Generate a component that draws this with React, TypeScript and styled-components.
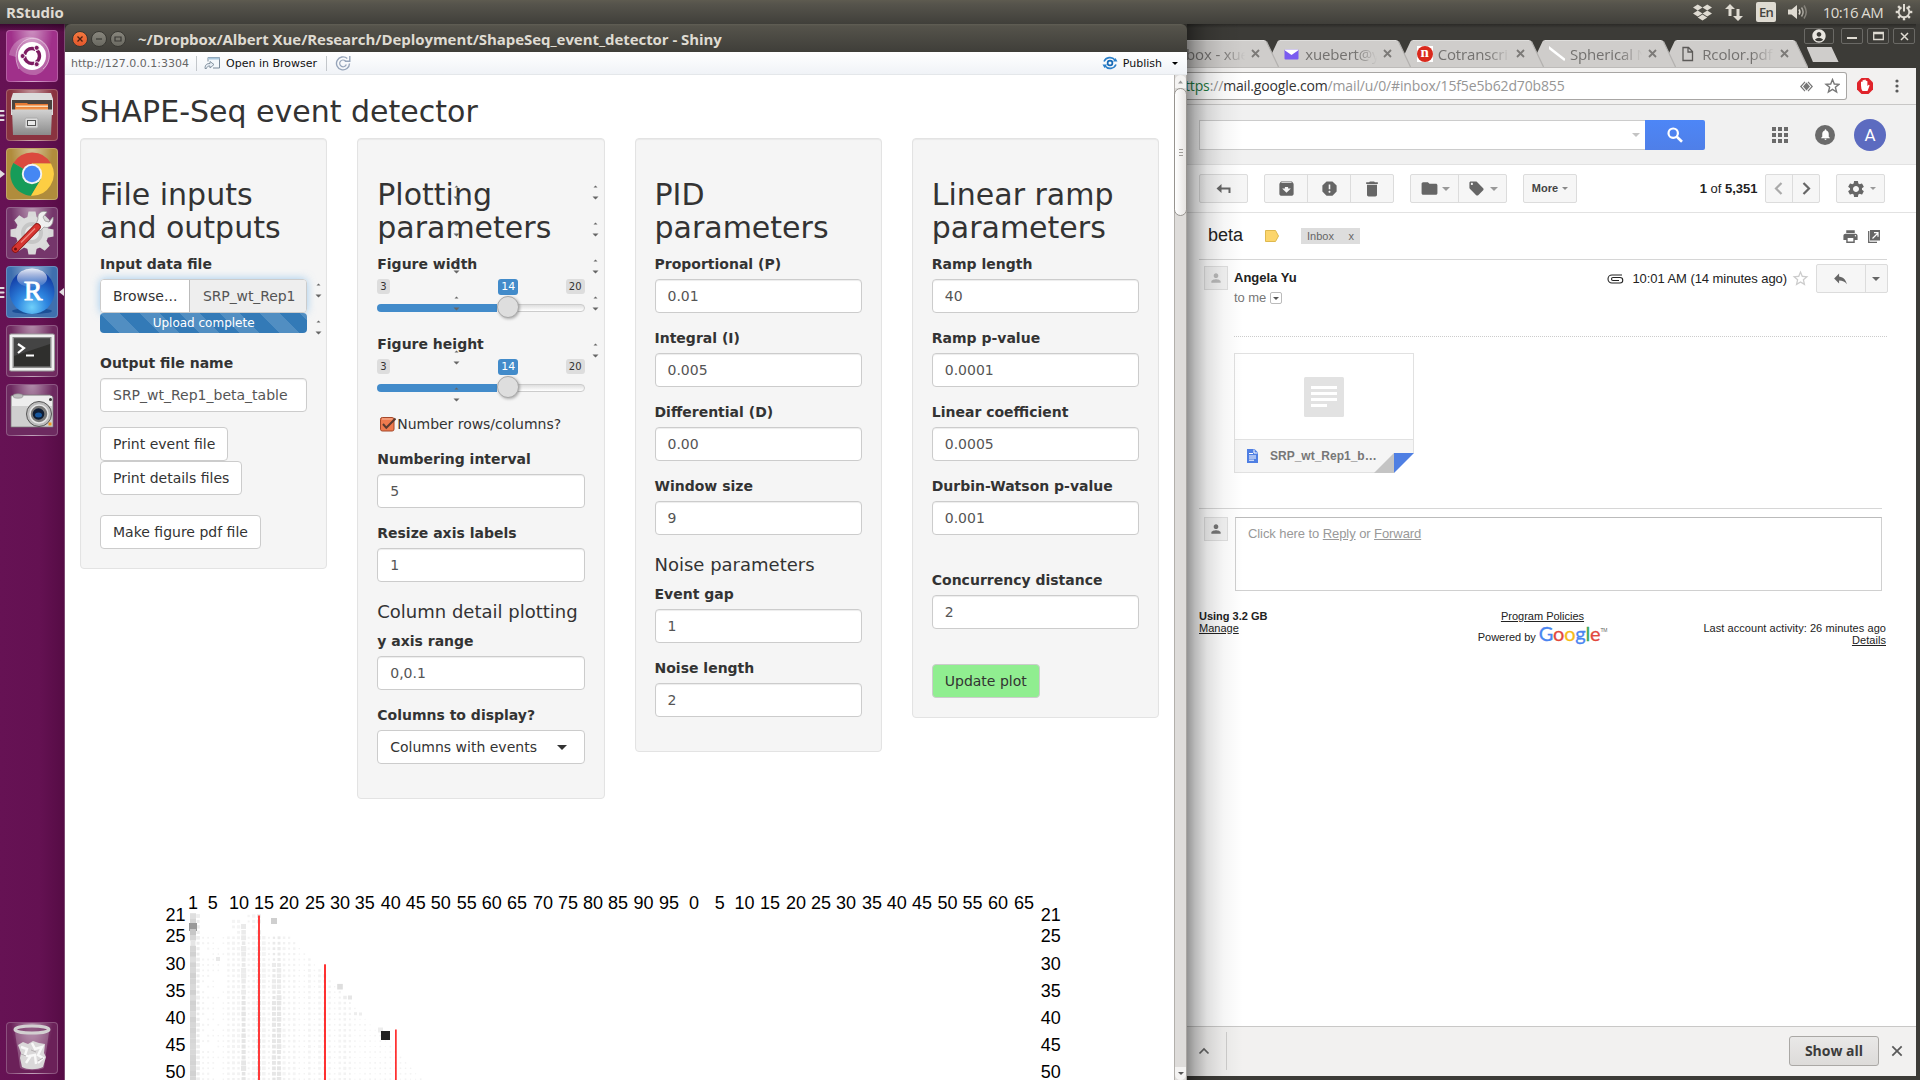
import React from "react";
import styled, { createGlobalStyle, css } from "styled-components";
import {
  MdArchive, MdReport, MdDelete, MdFolder, MdLocalOffer, MdSettings, MdPrint,
  MdNotifications, MdReply, MdPerson, MdStarBorder, MdAccountCircle,
} from "react-icons/md";
import { FaDropbox } from "react-icons/fa";

const dejavu = `"DejaVu Sans", sans-serif`;
const arial = `"Liberation Sans", Arial, sans-serif`;
const ubuntu = `"Open Sans", "Noto Sans", sans-serif`;

const GlobalStyle = createGlobalStyle`
  *, *::before, *::after { box-sizing: border-box; }
  html, body { margin: 0; padding: 0; background: #3c3b37; overflow: hidden; }
  svg { display: block; flex: none; }
`;

/* ---------- desktop ---------- */

const Desktop = styled.div`
  width: 1920px;
  height: 1080px;
  display: flex;
  flex-direction: column;
  overflow: hidden;
  font-family: ${dejavu};
`;

const MenuBar = styled.header`
  height: 24px;
  flex: none;
  display: flex;
  align-items: center;
  justify-content: space-between;
  padding: 0 7px 0 6px;
  background: linear-gradient(#5e5b50 0, #56544c 4px, #403f3a 24px);
  color: #dfdbd2;
  font-family: ${ubuntu};
`;

const AppName = styled.span`
  font-size: 15px;
  font-weight: 700;
  line-height: 22px;
`;

const Tray = styled.div`
  display: flex;
  align-items: center;
`;

const TraySlot = styled.div<{ $w: number }>`
  width: ${(p) => p.$w}px;
  height: 24px;
  display: flex;
  align-items: center;
  justify-content: center;
`;

const Lang = styled.div`
  width: 20px;
  height: 20px;
  border-radius: 2px;
  background: #dfdbd2;
  color: #45443f;
  font-size: 13px;
  line-height: 20px;
  text-align: center;
  font-weight: 600;
  letter-spacing: -0.8px;
`;

const Clock = styled.span`
  font-size: 15px;
  line-height: 22px;
  letter-spacing: -0.6px;
  white-space: nowrap;
`;

const Work = styled.div`
  flex: 1;
  display: flex;
  min-height: 0;
`;

/* ---------- launcher ---------- */

const Launcher = styled.nav`
  width: 65px;
  flex: none;
  display: flex;
  flex-direction: column;
  gap: 7px;
  padding: 6px 6px 6px;
  background: linear-gradient(rgba(30, 0, 25, 0.6), transparent 8px),
    linear-gradient(90deg, #661254 0, #641152 40px, #560c45 64px, #7d4a72 64px);
`;

const Tile = styled.div<{ $bg: string; $last?: boolean }>`
  position: relative;
  width: 52px;
  height: 52px;
  flex: none;
  border-radius: 4px;
  border: 1px solid rgba(255, 255, 255, 0.22);
  background: radial-gradient(ellipse at 50% -10%, rgba(255, 255, 255, 0.5), transparent 60%), ${(p) => p.$bg};
  display: flex;
  align-items: center;
  justify-content: center;
  ${(p) => p.$last && css`margin-top: auto;`}
`;

const RunningMark = styled.svg<{ $side: "left" | "right" }>`
  position: absolute;
  top: 19px;
  ${(p) => (p.$side === "left" ? "left: -7px;" : "right: -7px;")}
`;

const Pips = () => (
  <RunningMark $side="left" width="6" height="14" viewBox="0 0 6 14">
    <path d="M0 2h3.500M0 6.500h3.500M0 11h3.500" stroke="#e2dde0" strokeWidth="2.200" strokeLinecap="round" />
  </RunningMark>
);

const UbuntuIcon = () => (
  <svg width="50" height="50" viewBox="0 0 50 50">
    <path d="M2 24C5 6 26 0 38 12c9 10 4 28-9 32-12 1-20-6-20-18" fill="rgba(255,255,255,.25)" />
    <path d="M12 38C3 20 16 4 30 8c14 5 16 22 6 30" fill="none" stroke="rgba(255,255,255,.45)" strokeWidth="1" />
    <circle cx="25" cy="25" r="14" fill="#fff" />
    <circle cx="25" cy="25" r="7.500" fill="none" stroke="#7d1c62" strokeWidth="3.400" strokeDasharray="14.2 1.5" strokeDashoffset="-9" />
    <g fill="#7d1c62" stroke="#fff" strokeWidth=".9">
      <circle cx="15.600" cy="25" r="2.500" />
      <circle cx="29.700" cy="16.800" r="2.500" />
      <circle cx="29.700" cy="33.200" r="2.500" />
    </g>
  </svg>
);

const FilesIcon = () => (
  <svg width="50" height="50" viewBox="0 0 50 50">
    <defs>
      <linearGradient id="cab" x1="0" y1="0" x2="0" y2="1">
        <stop offset="0" stopColor="#d2d2d2" />
        <stop offset="1" stopColor="#8b8b8b" />
      </linearGradient>
    </defs>
    <path d="M6 3h38l2 6v16H4V9z" fill="#dcdcdc" />
    <path d="M5 10h40v12H5z" fill="#4a443f" />
    <path d="M8 13h12l1 1h20v8H8z" fill="#e77a33" />
    <path d="M9 15.500h32v1.500H9z" fill="#f7dcb8" />
    <path d="M9 17.500h32v4H9z" fill="#f09145" />
    <path d="M5 19.500h40L44 45H6z" fill="url(#cab)" />
    <rect x="18" y="28" width="13" height="10" rx="1.500" fill="#dcdcdc" stroke="#aaa" />
    <rect x="20.500" y="30.500" width="8" height="5" fill="#e9e9e9" stroke="#555" />
  </svg>
);

const ChromeIcon = () => (
  <svg width="46" height="46" viewBox="-23 -23 46 46">
    <path d="M0 0L-18.600-11A21.700 21.700 0 0 1 19-10.500L0-10.500z" fill="#db4a3e" />
    <path d="M0 0L-18.600-11A21.700 21.700 0 0 0-1 21.700L9 5z" fill="#169c59" />
    <path d="M0-10.500H19A21.700 21.700 0 0 1-1 21.700L9 5z" fill="#fdce43" />
    <circle r="10.200" fill="#f3f3f3" />
    <circle r="8.300" fill="#4587f3" />
  </svg>
);

const ToolsIcon = () => (
  <svg width="50" height="50" viewBox="0 0 50 50">
    <g transform="translate(25 25)">
      {Array.from({ length: 8 }, (_, i) => (
        <path key={i} d="M-5-14l1.500-7.500h7L5-14z" fill="#d9d9d9" transform={`rotate(${i * 45})`} />
      ))}
      <circle r="16.500" fill="#dcdcdc" />
      <circle r="11" fill="#c6c6c6" />
      <circle r="7" fill="#e6e6e6" />
    </g>
    <path d="M31 11c-1-6 4-9 9-7l-4 5 2 4 4 1 4-5c1 8-4 12-9 10l-4 4-5-4z" fill="#efefef" stroke="#9a9a9a" strokeWidth=".8" />
    <path d="M8.500 41L30 19" stroke="#8e1512" strokeWidth="7.500" strokeLinecap="round" />
    <path d="M8.500 41L30 19" stroke="#d63530" strokeWidth="5.800" strokeLinecap="round" />
    <path d="M14 34.500L28 20.500" stroke="#ef8a80" strokeWidth="1.400" />
    <circle cx="8.500" cy="41" r="1.500" fill="#6b0f0c" />
  </svg>
);

const RText = styled.span`
  position: absolute;
  left: 0;
  right: 0;
  top: 9px;
  text-align: center;
  font-family: "Liberation Serif", serif;
  font-size: 28px;
  line-height: 30px;
  color: #fff;
  -webkit-text-stroke: 0.8px #fff;
  padding-left: 2px;
`;

const RBallIcon = () => (
  <>
    <svg width="50" height="50" viewBox="0 0 50 50">
      <defs>
        <radialGradient id="ball" cx=".5" cy=".85" r=".75">
          <stop offset="0" stopColor="#6fd0fa" />
          <stop offset=".45" stopColor="#2e86e0" />
          <stop offset="1" stopColor="#1440a8" />
        </radialGradient>
        <linearGradient id="gloss" x1="0" y1="0" x2="0" y2="1">
          <stop offset="0" stopColor="#fff" stopOpacity=".9" />
          <stop offset="1" stopColor="#fff" stopOpacity=".05" />
        </linearGradient>
      </defs>
      <ellipse cx="25" cy="44" rx="20" ry="3" fill="#1b4f96" />
      <circle cx="25" cy="24.500" r="22.500" fill="url(#ball)" />
      <ellipse cx="25" cy="11" rx="15" ry="9.500" fill="url(#gloss)" />
    </svg>
    <RText>R</RText>
  </>
);

const TerminalIcon = () => (
  <svg width="50" height="50" viewBox="0 0 50 50">
    <rect x="2.500" y="8" width="45" height="37" rx="1.500" fill="#f0f0f0" stroke="#999" />
    <rect x="5.500" y="11" width="39" height="31" fill="#8c8c8c" />
    <rect x="7" y="12.500" width="36" height="28" fill="#2f2f2d" />
    <path d="M7 30l36-12V12.500H7z" fill="#444" />
    <path d="M11 18l6 4-6 5M19 29.500h8" fill="none" stroke="#fff" strokeWidth="2.200" />
  </svg>
);

const CameraIcon = () => (
  <svg width="50" height="50" viewBox="0 0 50 50">
    <path d="M4 11l3-1h36l3 2v30H4z" fill="#cfcfcf" stroke="#777" strokeWidth=".7" />
    <path d="M5 11h40v10H5z" fill="#ededed" />
    <ellipse cx="11" cy="11" rx="5" ry="2.200" fill="#bdbdbd" stroke="#8a8a8a" strokeWidth=".6" />
    <circle cx="43.500" cy="14.500" r="1.500" fill="#333" />
    <circle cx="32" cy="29" r="12.500" fill="#bbb" stroke="#555" />
    <circle cx="32" cy="29" r="9" fill="#777" stroke="#e6e6e6" strokeWidth="1.500" />
    <circle cx="31.500" cy="29" r="5.800" fill="#101d33" />
    <ellipse cx="31.500" cy="30" rx="3.500" ry="2.500" fill="#17579e" />
    <rect x="41.500" y="37.500" width="3" height="3" fill="#f0991f" />
  </svg>
);

const TrashIcon = () => (
  <svg width="50" height="50" viewBox="0 0 50 50">
    <path d="M8 9h34l-5 36c-5 3-19 3-24 0z" fill="rgba(255,255,255,.22)" />
    <path d="M11 22l5-3 5 2 5-3 6 2 6 1-1 9 2 4-3 10c-6 3-16 3-21 0l-2-9 1-5z" fill="#dad8d9" />
    <path d="M14 24l6 2-2 6 5 2-4 6M25 20l3 6 7-2-4 8 5 3-5 5M22 33l6-1 1 9" stroke="#f8f8f8" strokeWidth="2.400" fill="none" />
    <path d="M14 31l5 2M24 27l5 2M31 38l5-3" stroke="#b5b1b3" strokeWidth="1" />
    <ellipse cx="25" cy="6.500" rx="17" ry="3.600" fill="rgba(130,70,115,.6)" stroke="#d3d0d1" strokeWidth="3" />
  </svg>
);

/* ---------- RStudio viewer window ---------- */

const Viewer = styled.section`
  width: 1122px;
  flex: none;
  display: flex;
  flex-direction: column;
  background: linear-gradient(#2f2e2a, #2f2e2a) top / 100% 12px no-repeat, #fff;
`;

const TitleBar = styled.div`
  height: 28px;
  flex: none;
  display: flex;
  align-items: center;
  padding: 1px 8px 0 7px;
  gap: 3px;
  border-radius: 6px 6px 0 0;
  background: linear-gradient(#605e55 0, #55534b 2px, #3f3e39 28px);
`;

const WinButton = styled.span<{ $close?: boolean }>`
  width: 16px;
  height: 16px;
  border-radius: 50%;
  border: 1px solid #393833;
  background: ${(p) => (p.$close ? "linear-gradient(#f4793f, #e4572c)" : "linear-gradient(#88867d, #6a6961)")};
  display: flex;
  align-items: center;
  justify-content: center;
`;

const WinTitle = styled.span`
  margin-left: 9px;
  font-family: ${ubuntu};
  font-weight: 700;
  font-size: 15px;
  line-height: 24px;
  letter-spacing: -0.06px;
  color: #dfdbd2;
  white-space: nowrap;
`;

const ViewerToolbar = styled.div`
  height: 23px;
  flex: none;
  display: flex;
  align-items: center;
  border-bottom: 1px solid #e4e7ea;
  background: linear-gradient(#fff, #f0f3f7);
  padding: 0 9px 0 6px;
  font-size: 11px;
  color: #111;
  white-space: nowrap;
`;

const Address = styled.span`
  width: 125px;
  color: #666;
`;

const Sep = styled.i`
  width: 1px;
  height: 15px;
  background: #c3c7cb;
`;

const OpenLink = styled.span`
  display: flex;
  align-items: center;
  gap: 4px;
  width: 129px;
  padding-left: 7px;
`;

const Refresh = styled.span`
  margin-left: 8px;
  margin-right: auto;
`;

const Publish = styled.span`
  display: flex;
  align-items: center;
  gap: 5px;
`;

const Caret = styled.i<{ $size?: number; $color?: string; $ml?: number }>`
  flex: none;
  width: 0;
  height: 0;
  margin-left: ${(p) => p.$ml ?? 0}px;
  border: ${(p) => p.$size ?? 4}px solid transparent;
  border-top-color: ${(p) => p.$color ?? "#777"};
  border-bottom: 0;
`;

const ViewerBody = styled.div`
  flex: 1;
  min-height: 0;
  display: flex;
`;

const Page = styled.main`
  flex: 1;
  min-width: 0;
  overflow: hidden;
  color: #333;
  font-size: 14px;
  line-height: 20px;
`;

const PageTitle = styled.h2`
  margin: 20px 15px 10px;
  font-size: 30px;
  line-height: 33px;
  font-weight: 400;
`;

const Columns = styled.div`
  display: grid;
  grid-template-columns: repeat(4, 1fr);
  align-items: start;
`;

const Well = styled.form`
  position: relative;
  margin: 0 15px;
  padding: 19px;
  border: 1px solid #e3e3e3;
  border-radius: 4px;
  background: #f5f5f5;
  box-shadow: inset 0 1px 1px rgba(0, 0, 0, 0.05);
`;

const WellTitle = styled.h2`
  margin: 20px 0 10px;
  font-size: 30px;
  line-height: 33px;
  font-weight: 400;
`;

const SubTitle = styled.h4`
  margin: 20px 0 9px;
  font-size: 18px;
  line-height: 20px;
  font-weight: 400;
  white-space: nowrap;
`;

const Group = styled.div<{ $mb?: number }>`
  margin-bottom: ${(p) => p.$mb ?? 15}px;
`;

const Label = styled.label`
  display: block;
  margin-bottom: 5px;
  font-weight: 700;
  white-space: nowrap;
`;

const Control = styled.div`
  height: 34px;
  padding: 6px 12px;
  border: 1px solid #ccc;
  border-radius: 4px;
  background: #fff;
  box-shadow: inset 0 1px 1px rgba(0, 0, 0, 0.075);
  color: #555;
  white-space: nowrap;
`;

const SelectBox = styled(Control)`
  display: flex;
  align-items: center;
  justify-content: space-between;
  padding-right: 17px;
  box-shadow: none;
  color: #333;
`;

const FileControl = styled.div`
  display: flex;
  height: 34px;
  border: 1px solid #ccc;
  border-radius: 4px;
  box-shadow: 0 0 8px rgba(102, 175, 233, 0.6);
`;

const Browse = styled.span`
  width: 89px;
  flex: none;
  padding: 6px 12px;
  background: #fff;
  border-right: 1px solid #bbb;
  border-radius: 3px 0 0 3px;
`;

const FileName = styled.span`
  flex: 1;
  padding: 6px 0 6px 13px;
  border-radius: 0 3px 3px 0;
  background: #eee;
  color: #555;
  letter-spacing: -0.12px;
  white-space: nowrap;
`;

const Progress = styled.div`
  height: 20px;
  margin-bottom: 20px;
  border-radius: 4px;
  color: #fff;
  font-size: 12px;
  line-height: 20px;
  text-align: center;
  background: linear-gradient(45deg, rgba(255, 255, 255, 0.15) 25%, transparent 25%, transparent 50%,
      rgba(255, 255, 255, 0.15) 50%, rgba(255, 255, 255, 0.15) 75%, transparent 75%) 0 0 / 40px 40px,
    #337ab7;
`;

const Button = styled.button<{ $green?: boolean; $gap?: number }>`
  display: block;
  height: 34px;
  padding: 6px 12px;
  margin: 0 0 ${(p) => p.$gap ?? 0}px;
  border: 1px solid #ccc;
  border-radius: 4px;
  background: ${(p) => (p.$green ? "#90ee90" : "#fff")};
  color: #333;
  font: 14px/20px ${dejavu};
  white-space: nowrap;
`;

const SliderBox = styled.div`
  height: 40px;
`;

const SliderTags = styled.div`
  height: 17px;
  display: grid;
  grid-template-columns: 121px 1fr auto;
  align-items: start;
`;

const Tag = styled.span<{ $value?: boolean }>`
  justify-self: start;
  padding: 0 3px;
  height: ${(p) => (p.$value ? 16 : 15)}px;
  border-radius: 3px;
  font-size: ${(p) => (p.$value ? 11 : 10)}px;
  line-height: ${(p) => (p.$value ? 16 : 15)}px;
  background: ${(p) => (p.$value ? "#428bca" : "#dddddd")};
  color: ${(p) => (p.$value ? "#fff" : "#333")};
`;

const SliderTrack = styled.div`
  height: 22px;
  display: flex;
  align-items: center;
`;

const TrackFill = styled.span`
  width: 120px;
  height: 8px;
  background: #428bca;
  border-radius: 8px 0 0 8px;
  margin-top: 2px;
`;

const Knob = styled.span`
  width: 22px;
  height: 22px;
  flex: none;
  border-radius: 50%;
  border: 1px solid #aaa;
  background: #dedede;
  box-shadow: 1px 1px 3px rgba(0, 0, 0, 0.3);
  z-index: 1;
`;

const TrackRest = styled.span`
  flex: 1;
  height: 8px;
  margin: 2px 0 0 -4px;
  border: 1px solid #ccc;
  border-radius: 0 8px 8px 0;
  background: linear-gradient(#dedede, #fff);
`;

const CheckRow = styled.label`
  display: flex;
  align-items: center;
  gap: 1px;
  height: 20px;
  margin-bottom: 15px;
  padding-left: 2px;
  letter-spacing: -0.03px;
`;

const Spin = styled.svg`
  position: absolute;
`;

const Spinner = ({ x, y }: { x: number; y: number }) => (
  <Spin style={{ left: x, top: y }} width="7" height="15" viewBox="0 0 7 15">
    <path d="M1.500 2.500L3.500.5l2 2z M.500 11.500h6l-3 3z" fill="#666" />
  </Spin>
);

const ScrollTrack = styled.div`
  width: 13px;
  flex: none;
  display: flex;
  flex-direction: column;
  align-items: stretch;
  border-left: 1px solid #b3b0ac;
  border-right: 1px solid #a9a6a2;
  background: #dedcda;
`;

const ScrollCap = styled.div<{ $down?: boolean }>`
  height: 13px;
  display: flex;
  align-items: center;
  justify-content: center;
  background: #f4f3f2;
  margin-top: ${(p) => (p.$down ? "auto" : 0)};
  border-radius: ${(p) => (p.$down ? "0 0 6px 6px" : "6px 6px 0 0")};
`;

const ScrollThumb = styled.div`
  height: 128px;
  margin: 0 -1px;
  border: 1px solid #979490;
  border-radius: 7px;
  background: linear-gradient(90deg, #fff, #e6e4e2);
  display: flex;
  flex-direction: column;
  gap: 2px;
  align-items: center;
  justify-content: center;
`;

const Grip = styled.i`
  width: 4px;
  height: 1px;
  background: #a09d99;
`;

const PlotSvg = styled.svg`
  margin-top: 81px;
  font-family: ${arial};
  font-size: 18px;
  fill: #000;
`;

const Field = ({ label, value, mb }: { label: string; value: string; mb?: number }) => (
  <Group $mb={mb}>
    <Label>{label}</Label>
    <Control>{value}</Control>
  </Group>
);

const Slider = ({ label }: { label: string }) => (
  <Group>
    <Label>{label}</Label>
    <SliderBox>
      <SliderTags>
        <Tag>3</Tag>
        <Tag $value>14</Tag>
        <Tag>20</Tag>
      </SliderTags>
      <SliderTrack>
        <TrackFill />
        <Knob />
        <TrackRest />
      </SliderTrack>
    </SliderBox>
  </Group>
);

const topTicks: [string, number][] = [
  ["1", 193], ["5", 212.7], ["10", 239], ["15", 264], ["20", 289], ["25", 315], ["30", 340], ["35", 364.7],
  ["40", 390.7], ["45", 415.7], ["50", 440.7], ["55", 466.7], ["60", 491.7], ["65", 517], ["70", 543],
  ["75", 568], ["80", 593], ["85", 618], ["90", 643.5], ["95", 669], ["0", 694], ["5", 719.8], ["10", 744.6],
  ["15", 770], ["20", 796], ["25", 821], ["30", 846], ["35", 872], ["40", 896.8], ["45", 922], ["50", 947.5],
  ["55", 972.5], ["60", 998], ["65", 1024],
];
const sideTicks: [string, number][] = [
  ["21", 920.7], ["25", 941.7], ["30", 969.5], ["35", 996.6], ["40", 1023.7], ["45", 1050.6], ["50", 1077.7],
];

const hash = (a: number, b: number) => {
  const v = Math.sin(a * 127.1 + b * 311.7) * 43758.5453;
  return v - Math.floor(v);
};

const weight: Record<number, number> = {
  2: 3.6, 3: 2, 4: 2, 8: 2.6, 9: 3, 10: 3, 11: 4.8, 12: 2.2, 13: 3.3, 14: 4, 15: 3.8, 16: 2.4, 17: 4,
  18: 4.4, 19: 3, 20: 2.4, 21: 2.6, 24: 2.8, 26: 2.6, 27: 3, 28: 2.4, 30: 2.6, 31: 3, 32: 2.4,
};

type Cell = { x: number; y: number; w: number; h: number; f: string };

const cells: Cell[] = [];
for (let r = 21; r <= 51; r++) {
  const y = 916 + (r - 21) * 5.44;
  const g1 = 208 + Math.round(hash(r, 1) * 12) + (r === 21 || r === 26 || r === 29 ? 14 : 0);
  cells.push({ x: 193, y, w: r === 26 ? 5 : 6, h: 5.6, f: `rgb(${g1},${g1},${g1})` });
  for (let c = 2; c <= r - 5 && c < 48; c++) {
    const h = hash(c, r);
    const early = r < 25 && c !== 2;
    if (early && !(c >= 9 && c <= 14 && h > 0.4)) continue;
    const base = weight[c] ?? 1.6;
    let s = base * (0.75 + h * 0.35);
    if (r < 30 && (c === 17 || c === 18)) s *= 0.75;
    if (c < 8 && c > 2 && h < 0.3) continue;
    if (c > 32 && h < 0.35) s = 1;
    const heavy = c === 11 || c === 17 || c === 18 || c === 14;
    const g = (heavy ? (r > 35 ? 228 : 233) : c === 2 ? 235 : 241) + Math.round(h * 3);
    cells.push({ x: 193 + (c - 1) * 5.06, y, w: s, h: s, f: `rgb(${g},${g},${g})` });
  }
}
const special: [number, number, number, string][] = [
  [193, 927, 8, "#999"], [193, 932, 6, "#c6c6c6"], [274, 921, 6, "#cfcfcf"], [243.5, 926.5, 5, "#eaeaea"],
  [218, 959, 4, "#e8e8e8"], [340, 986.7, 5.6, "#dedede"], [345, 997.5, 3.5, "#ededed"], [350, 997.5, 4, "#e6e6e6"],
  [380.5, 1030, 5, "#ededed"], [385.5, 1035.5, 9, "#222"], [355.5, 1013.7, 3, "#ededed"], [360.5, 1014, 3, "#eee"],
];
special.forEach(([x, y, s, f]) => cells.push({ x, y, w: s, h: s, f }));

const Plot = () => (
  <PlotSvg width="1109" height="200" viewBox="65 880 1109 200">
    {cells.map((c, i) => (
      <rect key={i} x={c.x - c.w / 2} y={c.y - c.h / 2} width={c.w} height={c.h} fill={c.f} />
    ))}
    <rect x="258" y="915.500" width="2" height="170" fill="#ff3a3a" />
    <rect x="324.200" y="964.300" width="1.600" height="120" fill="#f00" />
    <rect x="395.200" y="1029.500" width="1.400" height="60" fill="#f00" />
    {topTicks.map(([t, x], i) => (
      <text key={i} x={x} y="908.700" textAnchor="middle">{t}</text>
    ))}
    {sideTicks.map(([t, y]) => (
      <React.Fragment key={t}>
        <text x="165.500" y={y}>{t}</text>
        <text x="1040.700" y={y}>{t}</text>
      </React.Fragment>
    ))}
  </PlotSvg>
);

const RViewer = () => (
  <Viewer>
    <TitleBar>
      <WinButton $close>
        <svg width="8" height="8" viewBox="0 0 8 8"><path d="M1.500 1.500l5 5m0-5l-5 5" stroke="#4a2013" strokeWidth="1.300" /></svg>
      </WinButton>
      <WinButton>
        <svg width="8" height="8" viewBox="0 0 8 8"><path d="M1 4h6" stroke="#3a3935" strokeWidth="1.200" /></svg>
      </WinButton>
      <WinButton>
        <svg width="8" height="8" viewBox="0 0 8 8"><path d="M1 2h6v4H1z" fill="none" stroke="#3a3935" strokeWidth="1.200" /></svg>
      </WinButton>
      <WinTitle>~/Dropbox/Albert Xue/Research/Deployment/ShapeSeq_event_detector - Shiny</WinTitle>
    </TitleBar>
    <ViewerToolbar>
      <Address>http://127.0.0.1:3304</Address>
      <Sep />
      <OpenLink>
        <svg width="18" height="14" viewBox="0 0 18 14">
          <path d="M4 1.500h11.500v10.500H9M4 1.500v4" fill="#f4f8fb" stroke="#7a8a99" />
          <path d="M4 2.500h11.500" stroke="#a9c6dc" strokeWidth="2" />
          <path d="M1 12.500c0-4 2-5 5-5v-2l4 3-4 3.500V10c-2 0-3 .5-3.500 2.500z" fill="#e8eef4" stroke="#7a8a99" strokeWidth=".9" />
        </svg>
        Open in Browser
      </OpenLink>
      <Sep />
      <Refresh>
        <svg width="16" height="16" viewBox="0 0 16 16">
          <path d="M12.300 3.500A6.500 6.500 0 1 0 14.500 8.500M14.800 1v5.200h-5" fill="none" stroke="#97a5ba" strokeWidth="1.400" />
          <path d="M10.500 6a3.400 3.400 0 1 0 .8 3.500" fill="none" stroke="#97a5ba" strokeWidth="1.200" />
        </svg>
      </Refresh>
      <Publish>
        <svg width="16" height="14" viewBox="0 0 16 14">
          <path d="M2 5.500A6.500 6.500 0 0 1 13 4M14 8.500A6.500 6.500 0 0 1 3 10" fill="none" stroke="#2a7fc9" strokeWidth="1.600" />
          <circle cx="8" cy="7" r="2.400" fill="none" stroke="#1669b5" strokeWidth="1.700" />
          <path d="M11 5.500h4.500L13.500 2zM5 8.500H.5L2.500 12z" fill="#2a7fc9" />
        </svg>
        Publish
        <Caret $size={3} $color="#000" $ml={5} />
      </Publish>
    </ViewerToolbar>
    <ViewerBody>
      <Page>
        <PageTitle>SHAPE-Seq event detector</PageTitle>
        <Columns>
          <Well>
            <WellTitle>File inputs<br />and outputs</WellTitle>
            <Label>Input data file</Label>
            <FileControl>
              <Browse>Browse...</Browse>
              <FileName>SRP_wt_Rep1</FileName>
            </FileControl>
            <Progress>Upload complete</Progress>
            <Field label="Output file name" value="SRP_wt_Rep1_beta_table" />
            <Button type="button">Print event file</Button>
            <Button type="button" $gap={20}>Print details files</Button>
            <Button type="button">Make figure pdf file</Button>
            <Spinner x={234} y={144} />
            <Spinner x={234} y={181} />
          </Well>
          <Well>
            <WellTitle>Plotting<br />parameters</WellTitle>
            <Slider label="Figure width" />
            <Slider label="Figure height" />
            <CheckRow>
              <svg width="17" height="17" viewBox="0 0 17 17">
                <rect x="1.500" y="1.500" width="13.500" height="13.500" rx="1.800" fill="#ef7a4e" stroke="#a4482a" />
                <path d="M3 3h10.500" stroke="#f8b89c" />
                <path d="M4 8l3.300 3.800L16.500 2.500" fill="none" stroke="#5b3a30" strokeWidth="2" />
              </svg>
              Number rows/columns?
            </CheckRow>
            <Field label="Numbering interval" value="5" />
            <Field label="Resize axis labels" value="1" />
            <SubTitle>Column detail plotting</SubTitle>
            <Field label="y axis range" value="0,0.1" />
            <Group>
              <Label>Columns to display?</Label>
              <SelectBox>Columns with events<Caret $size={5} $color="#333" /></SelectBox>
            </Group>
            {[46, 83, 120, 157, 204].map((y) => <Spinner key={y} x={234} y={y} />)}
            {[46, 83, 120, 157, 211, 248].map((y) => <Spinner key={y} x={95} y={y} />)}
          </Well>
          <Well>
            <WellTitle>PID<br />parameters</WellTitle>
            <Field label="Proportional (P)" value="0.01" />
            <Field label="Integral (I)" value="0.005" />
            <Field label="Differential (D)" value="0.00" />
            <Field label="Window size" value="9" />
            <SubTitle>Noise parameters</SubTitle>
            <Field label="Event gap" value="1" />
            <Field label="Noise length" value="2" />
          </Well>
          <Well>
            <WellTitle>Linear ramp<br />parameters</WellTitle>
            <Field label="Ramp length" value="40" />
            <Field label="Ramp p-value" value="0.0001" />
            <Field label="Linear coefficient" value="0.0005" />
            <Field label="Durbin-Watson p-value" value="0.001" mb={35} />
            <Field label="Concurrency distance" value="2" mb={35} />
            <Button type="button" $green>Update plot</Button>
          </Well>
        </Columns>
        <Plot />
      </Page>
      <ScrollTrack>
        <ScrollCap>
          <svg width="5" height="4" viewBox="0 0 5 4"><path d="M0 3.500L2.500.5 5 3.500z" fill="#999" /></svg>
        </ScrollCap>
        <ScrollThumb><Grip /><Grip /><Grip /></ScrollThumb>
        <ScrollCap $down><Caret $size={3} $color="#555" /></ScrollCap>
      </ScrollTrack>
    </ViewerBody>
  </Viewer>
);

/* ---------- Chrome window ---------- */

const Chrome = styled.section`
  position: relative;
  flex: 1;
  min-width: 0;
  display: flex;
  flex-direction: column;
  padding: 0 4px 4px 0;
  background: #3c3b37;
  overflow: hidden;
`;

const WindowShadow = styled.div`
  position: absolute;
  left: 0;
  top: 0;
  width: 56px;
  height: 100%;
  z-index: 20;
  pointer-events: none;
  background: linear-gradient(90deg, rgba(0, 0, 0, 0.42), rgba(0, 0, 0, 0.27) 8px, rgba(0, 0, 0, 0.12) 20px,
    rgba(0, 0, 0, 0.04) 36px, transparent);
`;

const TabStrip = styled.div`
  height: 44px;
  flex: none;
  display: flex;
  align-items: flex-end;
  margin-left: -54px;
  background: linear-gradient(#2b2a27, #3c3b37 4px);
`;

const TabBox = styled.div<{ $z: number }>`
  position: relative;
  z-index: ${(p) => p.$z};
  width: 146px;
  height: 28px;
  flex: none;
  margin-right: -13.7px;
  display: grid;
  grid-template-columns: 16px 73px 10px;
  column-gap: 5px;
  align-items: center;
  padding: 0 0 1px 19px;
`;

const TabShape = styled.svg`
  position: absolute;
  inset: 0;
  z-index: -1;
`;

const TabText = styled.span`
  overflow: hidden;
  white-space: nowrap;
  font-family: ${ubuntu};
  font-size: 15px;
  line-height: 24px;
  letter-spacing: -0.15px;
  color: #747270;
  mask-image: linear-gradient(90deg, #000 68%, transparent 99%);
`;

const NewTab = styled.span`
  align-self: flex-end;
  width: 32px;
  height: 15px;
  margin: 0 0 6px 12px;
  background: #cfcdcb;
  clip-path: polygon(0 0, 78% 0, 100% 100%, 20% 100%);
`;

const FrameButtons = styled.div`
  position: absolute;
  right: 5px;
  top: 4px;
  display: flex;
  gap: 4px;
`;

const FrameButton = styled.span<{ $w?: number; $mr?: number }>`
  width: ${(p) => p.$w ?? 22}px;
  height: 16px;
  margin-right: ${(p) => p.$mr ?? 0}px;
  border: 1px solid #6a6965;
  border-radius: 2px;
  display: flex;
  align-items: center;
  justify-content: center;
  color: #e9e6e0;
`;

const UrlBar = styled.div`
  height: 37px;
  flex: none;
  display: flex;
  align-items: center;
  padding: 0 17px 0 0;
  background: #f2f1f0;
  border-bottom: 1px solid #c8c7c6;
`;

const UrlBox = styled.div`
  width: 660px;
  height: 28px;
  display: flex;
  align-items: center;
  border: 1px solid #a8a6a4;
  border-left: 0;
  border-radius: 0 3px 3px 0;
  background: #fff;
  font-family: ${ubuntu};
  font-size: 14px;
  letter-spacing: -0.15px;
  line-height: 24px;
  white-space: nowrap;
  padding-right: 6px;
`;

const UrlText = styled.span`
  margin-left: -2px;
  margin-right: auto;
  color: #969696;
`;
const Secure = styled.span`
  color: #1d7d43;
`;
const Host = styled.span`
  color: #333;
`;

const EyeIcon = styled.svg`
  margin-right: 1px;
`;

const BlockIcon = styled.svg`
  margin-left: 9px;
`;

const DotsIcon = styled.svg`
  margin-left: auto;
`;

const GmailHeader = styled.div`
  height: 60px;
  flex: none;
  display: flex;
  align-items: center;
  background: #f1f1f1;
  border-bottom: 1px solid #e2e2e2;
  padding-left: 12px;
`;

const SearchInput = styled.div`
  width: 446px;
  height: 30px;
  display: flex;
  align-items: center;
  justify-content: flex-end;
  padding-right: 5px;
  border: 1px solid #ccc;
  border-right: 0;
  background: #fff;
`;

const SearchButton = styled.div`
  width: 60px;
  height: 30px;
  border-radius: 0 2px 2px 0;
  background: linear-gradient(#4d86f7, #4f7fe8);
  display: flex;
  align-items: center;
  justify-content: center;
`;

const AppsIcon = styled.svg`
  margin-left: 67px;
`;

const Avatar = styled.span`
  width: 32px;
  height: 32px;
  margin-left: 19px;
  border-radius: 50%;
  background: #5c6bc0;
  color: #fff;
  font: 17px/32px Roboto, sans-serif;
  text-align: center;
`;

const Bell = styled.span`
  width: 20px;
  height: 20px;
  margin-left: 27px;
  border-radius: 50%;
  background: #6b6b6b;
  display: flex;
  align-items: center;
  justify-content: center;
`;

const MailToolbar = styled.div`
  height: 48px;
  flex: none;
  display: flex;
  align-items: center;
  padding: 0 31px 0 12px;
  gap: 16px;
  border-bottom: 1px solid #e2e2e2;
  background: #fff;
`;

const ButtonGroup = styled.div`
  display: flex;
  border: 1px solid #dcdcdc;
  border-radius: 2px;
  background: #f6f6f6;
  color: #666;
`;

const MailButton = styled.span<{ $w: number; $ink?: string }>`
  width: ${(p) => p.$w}px;
  height: 27px;
  display: flex;
  align-items: center;
  justify-content: center;
  font: 700 11px/27px ${arial};
  color: ${(p) => p.$ink ?? "#666"};
  & + & {
    border-left: 1px solid #dcdcdc;
  }
`;

const Counter = styled.span`
  margin: 0 -9px 0 auto;
  font: 13px/20px ${arial};
  color: #222;
  white-space: nowrap;
`;

const MailPane = styled.div`
  flex: 1;
  min-height: 0;
  display: flex;
  flex-direction: column;
  background: #fff;
  padding-left: 12px;
  font-family: ${arial};
  font-size: 13px;
  color: #222;
`;

const SubjectRow = styled.div`
  width: 688px;
  height: 47px;
  display: flex;
  align-items: center;
  padding: 0 7px 0 9px;
  border-bottom: 1px solid #d6d6d6;
`;

const Subject = styled.span`
  width: 57px;
  font-size: 18px;
  line-height: 22px;
  padding-bottom: 2px;
`;

const InboxTag = styled.span`
  display: flex;
  justify-content: space-between;
  width: 59px;
  height: 16px;
  margin: 0 auto 0 22px;
  padding: 0 6px;
  background: #ddd;
  color: #666;
  font-size: 11px;
  line-height: 16px;
`;

const OpenIcon = styled.svg`
  margin: 1px 0 0 9px;
`;

const SenderRow = styled.div`
  width: 689px;
  display: flex;
  align-items: flex-start;
  padding: 4px 0 0 5px;
`;

const Portrait = styled.span<{ $mt?: number }>`
  width: 24px;
  height: 24px;
  margin-top: ${(p) => p.$mt ?? 0}px;
  flex: none;
  border: 1px solid #e0e0e0;
  background: #f3f3f3;
  display: flex;
  align-items: center;
  justify-content: center;
`;

const SenderInfo = styled.div`
  flex: 1;
  padding: 4px 0 0 6px;
  line-height: 20px;
`;

const Sender = styled.div`
  font-weight: 700;
`;

const Recipient = styled.div`
  display: flex;
  align-items: center;
  gap: 4px;
  color: #777;
  letter-spacing: -0.05px;
`;

const Expand = styled.span`
  width: 12px;
  height: 12px;
  border: 1px solid #bbb;
  border-radius: 2px;
  display: flex;
  align-items: center;
  justify-content: center;
`;

const SentAt = styled.span`
  display: flex;
  align-items: center;
  height: 29px;
  gap: 4px;
  margin-right: 6px;
  white-space: nowrap;
  line-height: 20px;
  letter-spacing: -0.06px;
`;

const ClipIcon = styled.svg`
  margin-right: 4px;
`;

const Dotted = styled.hr`
  width: 653px;
  margin: 28px 0 16px 35px;
  border: 0;
  border-top: 1px dotted #ccc;
`;

const Attachment = styled.div`
  position: relative;
  width: 180px;
  height: 120px;
  flex: none;
  margin-left: 35px;
  border: 1px solid #e1e1e1;
  display: flex;
  flex-direction: column;
`;

const Preview = styled.div`
  flex: 1;
  display: flex;
  align-items: center;
  justify-content: center;
`;

const FileBar = styled.div`
  height: 33px;
  border-top: 1px solid #e1e1e1;
  background: #f5f5f5;
  display: flex;
  align-items: center;
  gap: 12px;
  padding-left: 12px;
  font-size: 12px;
  font-weight: 700;
  color: #777;
`;

const FoldCorner = styled.svg`
  position: absolute;
  right: -1px;
  bottom: -1px;
`;

const ReplyArea = styled.div`
  width: 683px;
  flex: none;
  margin-top: 35px;
  padding: 8px 0 0 5px;
  border-top: 1px solid #d6d6d6;
  display: flex;
`;

const ReplyBox = styled.div`
  flex: 1;
  height: 74px;
  margin-left: 7px;
  padding: 7px 12px;
  border: 1px solid #d0d0d0;
  border-top-color: #bbb;
  line-height: 18px;
  letter-spacing: -0.08px;
  color: #999;
`;

const Footer = styled.div`
  width: 687px;
  margin-top: 19px;
  display: grid;
  grid-template-columns: 1fr auto 1fr;
  font-size: 11px;
  line-height: 12px;
`;

const FootMid = styled.div`
  display: flex;
  flex-direction: column;
  align-items: center;
`;

const FootRight = styled.div`
  padding-top: 12px;
  text-align: right;
  letter-spacing: 0.06px;
`;

const Powered = styled.div`
  display: flex;
  align-items: baseline;
  gap: 3px;
  line-height: 22px;
`;

const Google = styled.span`
  font-family: Lato, sans-serif;
  font-size: 20px;
  letter-spacing: -0.2px;
`;

const G = styled.span<{ $c: string }>`
  color: ${(p) => p.$c};
  -webkit-text-stroke: 0.3px ${(p) => p.$c};
`;

const Tm = styled.sup`
  font: 5px/5px ${arial};
  color: #666;
  vertical-align: 9px;
`;

const Shelf = styled.div`
  height: 50px;
  flex: none;
  display: flex;
  align-items: center;
  padding: 0 13px 2px 11px;
  border-top: 1px solid #c9c8c7;
  background: #f2f1f0;
`;

const ShelfDivider = styled.i`
  width: 1px;
  height: 38px;
  margin: 0 auto 0 16px;
  background: #d0cfce;
`;

const ShowAll = styled.span`
  width: 90px;
  height: 30px;
  margin-right: 12px;
  border: 1px solid #aaa8a5;
  border-radius: 3px;
  background: linear-gradient(#e9e8e7, #dddbd9);
  color: #3c3c3c;
  font: 700 14px/27px ${ubuntu};
  text-align: center;
`;

const Cross = ({ s = 9, c = "#7c7a78", w = 1.8 }: { s?: number; c?: string; w?: number }) => (
  <svg width={s} height={s} viewBox="0 0 9 9"><path d="M1 1l7 7m0-7L1 8" stroke={c} strokeWidth={w} /></svg>
);

const Tab = ({ title, z, icon }: { title: string; z: number; icon: React.ReactNode }) => (
  <TabBox $z={z}>
    <TabShape width="146" height="28" viewBox="0 0 146 28">
      <path d="M0 28L12.500 1.500Q13.200 0 15 0H131Q132.800 0 133.500 1.500L146 28z" fill="#cfcdcb" />
      <path d="M133.500 1.500L146 28" stroke="#b3b1af" strokeWidth="1.200" />
      <path d="M15 .5H131" stroke="#dedddb" />
      <path d="M0 27.500H146" stroke="#bdbbb9" />
    </TabShape>
    {icon}
    <TabText>{title}</TabText>
    <Cross />
  </TabBox>
);

const MailTabIcon = () => (
  <svg width="15" height="16" viewBox="0 0 15 16">
    <rect x=".5" y="3.500" width="14" height="10" rx="1" fill="#7a5cf0" />
    <path d="M1 3.500h13v1L7.500 9 1 4.500z" fill="#fff" />
  </svg>
);

const NBadge = styled.span`
  width: 16px;
  height: 16px;
  background: #fff;
  display: flex;
`;
const NDisc = styled.span`
  width: 16px;
  height: 16px;
  border-radius: 50%;
  background: #d9291c;
  color: #fff;
  font: 700 15px/13px "Liberation Serif", serif;
  text-align: center;
`;

const ChromeWindow = () => (
  <Chrome>
    <WindowShadow />
    <TabStrip>
      <Tab z={9} title="Inbox - xuebe" icon={<i />} />
      <Tab z={8} title="xuebert@y" icon={<MailTabIcon />} />
      <Tab z={7} title="Cotranscri" icon={<NBadge><NDisc>n</NDisc></NBadge>} />
      <Tab
        z={6}
        title="Spherical N"
        icon={<svg width="16" height="16" viewBox="0 0 16 16"><path d="M-2 0L16 14" stroke="#fff" strokeWidth="2.500" /></svg>}
      />
      <Tab
        z={5}
        title="Rcolor.pdf"
        icon={
          <svg width="15" height="16" viewBox="0 0 15 16">
            <path d="M2 1.500h5.500l4 4v9H2zM7 1.500v4.500h4.500" fill="none" stroke="#5c5a58" strokeWidth="1.300" />
          </svg>
        }
      />
      <NewTab />
      <FrameButtons>
        <FrameButton $w={30} $mr={3}><MdAccountCircle size={16} /></FrameButton>
        <FrameButton><svg width="10" height="10" viewBox="0 0 10 10"><path d="M0 7h10" stroke="#dfdbd2" strokeWidth="2" /></svg></FrameButton>
        <FrameButton>
          <svg width="11" height="10" viewBox="0 0 11 10"><path d="M.7 1.500h9.600v7H.7zM.7 2.500h9.600" fill="none" stroke="#dfdbd2" strokeWidth="1.300" /></svg>
        </FrameButton>
        <FrameButton><Cross c="#dfdbd2" w={1.5} /></FrameButton>
      </FrameButtons>
    </TabStrip>
    <UrlBar>
      <UrlBox>
        <UrlText><Secure>ttps</Secure>://<Host>mail.google.com</Host>/mail/u/0/#inbox/15f5e5b62d70b855</UrlText>
        <EyeIcon width="13" height="11" viewBox="0 0 13 11">
          <path d="M5 .8L.8 5.500 5 10.200M8 .8l4.200 4.700L8 10.200" fill="none" stroke="#777" strokeWidth="1.200" />
          <path d="M6.500 1.500L10 5.500l-3.500 4-3.500-4z" fill="#777" />
        </EyeIcon>
        <svg width="26" height="16" viewBox="-11 0 26 16">
          <path d="M7.500 1.500l1.800 4.500 4.700.3-3.600 3 1.200 4.700-4.100-2.600L3.400 14l1.200-4.700L1 6.300 5.700 6z" fill="none" stroke="#777" strokeWidth="1.400" />
        </svg>
      </UrlBox>
      <BlockIcon width="18" height="18" viewBox="0 0 18 18">
        <path d="M5.500 1h7L17 5.500v7L12.500 17h-7L1 12.500v-7z" fill="#e0242b" />
        <path d="M5 8.500V5q1-1 1.500 0V3.500q1-1 1.700 0V3q1-1 1.600 0v1q1-.8 1.600.3V9l1.300-1.300q1 0 .8 1L11.500 14h-5Q5 12 5 8.500z" fill="#fff" />
      </BlockIcon>
      <DotsIcon width="4" height="14" viewBox="0 0 4 14">
        <g fill="#5a5a5a"><circle cx="2" cy="2" r="1.600" /><circle cx="2" cy="7" r="1.600" /><circle cx="2" cy="12" r="1.600" /></g>
      </DotsIcon>
    </UrlBar>
    <GmailHeader>
      <SearchInput><Caret $color="#c4c4c4" /></SearchInput>
      <SearchButton>
        <svg width="16" height="16" viewBox="0 0 16 16">
          <circle cx="6.200" cy="6.200" r="4.700" fill="none" stroke="#fff" strokeWidth="2.200" />
          <path d="M9.800 9.800l5.200 5" stroke="#fff" strokeWidth="2.600" />
        </svg>
      </SearchButton>
      <AppsIcon width="16" height="16" viewBox="0 0 16 16">
        {[0, 6, 12].map((y) => [0, 6, 12].map((x) => <rect key={`${x}-${y}`} x={x} y={y} width="4" height="4" fill="#6b6b6b" />))}
      </AppsIcon>
      <Bell><MdNotifications size={13} color="#fff" /></Bell>
      <Avatar>A</Avatar>
    </GmailHeader>
    <MailToolbar>
      <ButtonGroup>
        <MailButton $w={47}>
          <svg width="15" height="10" viewBox="0 0 15 10"><path d="M5.500 0v9L.5 4.500zM4 3.500h10.500V9h-2V5.500H4z" fill="#666" /></svg>
        </MailButton>
      </ButtonGroup>
      <ButtonGroup>
        <MailButton $w={42}><MdArchive size={19} /></MailButton>
        <MailButton $w={43}><MdReport size={19} /></MailButton>
        <MailButton $w={43}><MdDelete size={20} /></MailButton>
      </ButtonGroup>
      <ButtonGroup>
        <MailButton $w={47}><MdFolder size={19} /><Caret $ml={3} $color="#999" /></MailButton>
        <MailButton $w={48}><MdLocalOffer size={17} /><Caret $ml={5} $color="#999" /></MailButton>
      </ButtonGroup>
      <ButtonGroup>
        <MailButton $w={52} $ink="#444">More<Caret $size={3.5} $ml={4} $color="#888" /></MailButton>
      </ButtonGroup>
      <Counter><b>1</b> of <b>5,351</b></Counter>
      <ButtonGroup>
        <MailButton $w={26.5}>
          <svg width="9" height="13" viewBox="0 0 9 13"><path d="M7.500 1L2 6.500 7.500 12" fill="none" stroke="#aaa" strokeWidth="2.200" /></svg>
        </MailButton>
        <MailButton $w={27}>
          <svg width="9" height="13" viewBox="0 0 9 13"><path d="M1.500 1L7 6.500 1.500 12" fill="none" stroke="#666" strokeWidth="2.200" /></svg>
        </MailButton>
      </ButtonGroup>
      <ButtonGroup>
        <MailButton $w={47}><MdSettings size={20} /><Caret $size={3.5} $ml={4} $color="#999" /></MailButton>
      </ButtonGroup>
    </MailToolbar>
    <MailPane>
      <SubjectRow>
        <Subject>beta</Subject>
        <svg width="14" height="12" viewBox="0 0 14 12"><path d="M.5.5h10l3 5.500-3 5.500H.5z" fill="#fcd56b" stroke="#dfb94f" /></svg>
        <InboxTag><span>Inbox</span><span>x</span></InboxTag>
        <MdPrint size={17} color="#666" />
        <OpenIcon width="12" height="13" viewBox="0 0 12 13">
          <path d="M.7 1v11.300H9" fill="none" stroke="#666" strokeWidth="1.300" />
          <rect x="2" width="10" height="10.500" fill="#666" />
          <path d="M4.500 8.500l5-5M6 2.700h4v4" fill="none" stroke="#fff" strokeWidth="1.200" />
        </OpenIcon>
      </SubjectRow>
      <SenderRow>
        <Portrait $mt={2}><MdPerson size={14} color="#bbb" /></Portrait>
        <SenderInfo>
          <Sender>Angela Yu</Sender>
          <Recipient>to me <Expand><Caret $size={3} $color="#555" /></Expand></Recipient>
        </SenderInfo>
        <SentAt>
          <ClipIcon width="17" height="10" viewBox="0 0 17 10">
            <path d="M12 6.500H6a1.500 1.500 0 0 1 0-3h7a2.700 2.700 0 0 1 0 5.500H5A4 4 0 0 1 5 1h10" fill="none" stroke="#222" strokeWidth="1.100" />
          </ClipIcon>
          10:01 AM (14 minutes ago)
          <MdStarBorder size={19} color="#ccc" />
        </SentAt>
        <ButtonGroup>
          <MailButton $w={47.5}><MdReply size={17} /></MailButton>
          <MailButton $w={22.5}><Caret $color="#666" /></MailButton>
        </ButtonGroup>
      </SenderRow>
      <Dotted />
      <Attachment>
        <Preview>
          <svg width="40" height="40" viewBox="0 0 40 40">
            <rect width="40" height="40" rx="1.500" fill="#e2e2e2" />
            <path d="M7 10.500h26M7 16.500h26M7 22.500h26M7 28.500h16" stroke="#fff" strokeWidth="3" />
          </svg>
        </Preview>
        <FileBar>
          <svg width="11" height="14" viewBox="0 0 11 14">
            <path d="M0 0h7.500L11 3.500V14H0z" fill="#4f7fe3" />
            <path d="M2 4.500h4M2 7h7M2 9h7M2 11.200h5M7 .5v3.500h3.500" stroke="#fff" strokeWidth="1" fill="none" />
          </svg>
          SRP_wt_Rep1_b…
        </FileBar>
        <FoldCorner width="40" height="20" viewBox="0 0 40 20">
          <path d="M20 0h20v20H20z" fill="#fff" />
          <path d="M0 20L20 0v20z" fill="#c4c4c4" />
          <path d="M20 0h20L20 20z" fill="#4f7fe3" />
        </FoldCorner>
      </Attachment>
      <ReplyArea>
        <Portrait><MdPerson size={14} color="#777" /></Portrait>
        <ReplyBox>Click here to <u>Reply</u> or <u>Forward</u></ReplyBox>
      </ReplyArea>
      <Footer>
        <div><b>Using 3.2 GB</b><br /><u>Manage</u></div>
        <FootMid>
          <u>Program Policies</u>
          <Powered>
            Powered by
            <Google>
              <G $c="#4a85f0">G</G><G $c="#e2483d">o</G><G $c="#f6bb19">o</G><G $c="#4a85f0">g</G><G $c="#3da757">l</G><G $c="#e2483d">e</G><Tm>TM</Tm>
            </Google>
          </Powered>
        </FootMid>
        <FootRight>Last account activity: 26 minutes ago<br /><u>Details</u></FootRight>
      </Footer>
    </MailPane>
    <Shelf>
      <svg width="12" height="8" viewBox="0 0 12 8"><path d="M1.500 6.500L6 2l4.500 4.500" fill="none" stroke="#666" strokeWidth="1.700" /></svg>
      <ShelfDivider />
      <ShowAll>Show all</ShowAll>
      <Cross s={12} c="#5a5a5a" w={1.3} />
    </Shelf>
  </Chrome>
);

export default function App() {
  return (
    <Desktop>
      <GlobalStyle />
      <MenuBar>
        <AppName>RStudio</AppName>
        <Tray>
          <TraySlot $w={38}><FaDropbox size={19} /></TraySlot>
          <TraySlot $w={26}>
            <svg width="18" height="17" viewBox="0 0 18 17">
              <path d="M5 0l5 5H6.500v7h-3V5H0zM13 17l-5-5h3.500V5h3v7H18z" fill="#dfdbd2" />
            </svg>
          </TraySlot>
          <TraySlot $w={38}><Lang>En</Lang></TraySlot>
          <TraySlot $w={26}>
            <svg width="20" height="16" viewBox="0 0 20 16">
              <path d="M0 5.500h3.500L9 1v14l-5.500-4.500H0z" fill="#dfdbd2" />
              <path d="M11 5.500q1.800 2.500 0 5" fill="none" stroke="#dfdbd2" strokeWidth="1.500" />
              <path d="M13.500 3.500q3.200 4.500 0 9" fill="none" stroke="#a9a69e" strokeWidth="1.500" />
              <path d="M16 1.500q4.500 6.500 0 13" fill="none" stroke="#85827a" strokeWidth="1.500" />
            </svg>
          </TraySlot>
          <TraySlot $w={84}><Clock>10:16 AM</Clock></TraySlot>
          <svg width="18" height="18" viewBox="-9 -9 18 18">
            {Array.from({ length: 7 }, (_, i) => (
              <rect key={i} x="-1.200" y="-8.300" width="2.400" height="3" fill="#dfdbd2" transform={`rotate(${45 + i * 45})`} />
            ))}
            <path d="M-2.500-4.700A5.300 5.300 0 1 0 2.500-4.700" fill="none" stroke="#dfdbd2" strokeWidth="1.900" />
            <path d="M0-8V-.5" stroke="#dfdbd2" strokeWidth="2" />
          </svg>
        </Tray>
      </MenuBar>
      <Work>
        <Launcher>
          <Tile $bg="#a0308a"><UbuntuIcon /></Tile>
          <Tile $bg="#8a3340"><FilesIcon /><Pips /></Tile>
          <Tile $bg="#b08c3c">
            <ChromeIcon />
            <RunningMark $side="left" width="5" height="12" viewBox="0 0 5 12"><path d="M0 2l5 4-5 4z" fill="#e2dde0" /></RunningMark>
          </Tile>
          <Tile $bg="#75366b"><ToolsIcon /></Tile>
          <Tile $bg="#3f6fae">
            <RBallIcon />
            <Pips />
            <RunningMark $side="right" width="6" height="12" viewBox="0 0 6 12"><path d="M6 2L1 6l5 4z" fill="#e2dde0" /></RunningMark>
          </Tile>
          <Tile $bg="#702a60"><TerminalIcon /></Tile>
          <Tile $bg="#6d2a60"><CameraIcon /></Tile>
          <Tile $bg="#6b2159" $last><TrashIcon /></Tile>
        </Launcher>
        <RViewer />
        <ChromeWindow />
      </Work>
    </Desktop>
  );
}
